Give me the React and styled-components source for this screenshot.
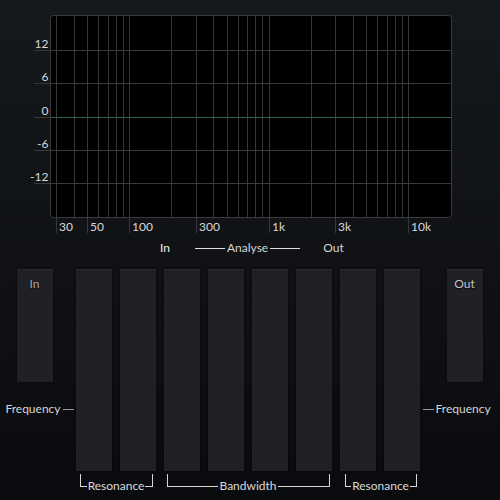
import React from "react";
import styled, { createGlobalStyle } from "styled-components";

const GlobalStyle = createGlobalStyle`
  html, body {
    margin: 0;
    padding: 0;
  }
  body {
    width: 500px;
    height: 500px;
    overflow: hidden;
    background: linear-gradient(180deg, #15181c 0%, #101215 50%, #0a0b0e 100%);
    font-family: Lato, "Noto Sans", sans-serif;
    color: #d8d8d8;
  }
`;

const Page = styled.div`
  width: 500px;
  height: 500px;
  display: flex;
  flex-direction: column;
`;

const Chart = styled.svg`
  display: block;
  width: 460px;
  height: 238px;
  flex: none;
`;

const AnalyseRow = styled.div`
  display: flex;
  align-items: center;
  height: 16px;
  margin-top: 2px;
  padding-left: 160px;
  font-size: 12px;
  line-height: 16px;
`;

const Toggle = styled.span`
  color: ${(p) => (p.$on ? "#f2f2f2" : "#d4d4d4")};
  margin: ${(p) => p.$margin || "0"};
`;

const Rule = styled.span`
  width: 30px;
  height: 1px;
  background: #e0e0e0;
  margin-top: 1px;
`;

const Controls = styled.div`
  display: flex;
  margin-top: 13px;
`;

const SideColumn = styled.div`
  width: ${(p) => p.$width}px;
  display: flex;
  flex-direction: column;
  align-items: ${(p) => (p.$right ? "flex-start" : "flex-end")};
`;

const Meter = styled.div`
  width: 36px;
  height: 113px;
  margin: ${(p) => (p.$right ? "0 0 0 27px" : "0 23px 0 0")};
  background: #202027;
  border-top: 1px solid #2b2b31;
  box-sizing: border-box;
  box-shadow: 0 0 2px rgba(0, 0, 0, 0.6);
  display: flex;
  justify-content: center;
  padding-top: 6px;
  font-size: 12px;
  line-height: 16px;
  color: ${(p) => (p.$right ? "#c6c6c6" : "#a9a9a9")};
  text-shadow: 0 1px 1px rgba(0, 0, 0, 0.8);
`;

const FreqLabel = styled.div`
  display: flex;
  align-items: center;
  gap: 2px;
  margin-top: 19px;
  font-size: 12px;
  line-height: 16px;
  color: #d6d6d6;
  ${(p) => (p.$right ? "padding-left: 3px;" : "padding-right: 2px;")}
`;

const Dash = styled.span`
  width: 11px;
  height: 1px;
  background: #9a9a9a;
  margin-top: 1px;
`;

const SliderArea = styled.div`
  display: grid;
  grid-template-columns: repeat(8, 36px);
  column-gap: 8px;
  row-gap: 3px;
`;

const Slider = styled.div`
  height: 202px;
  background: #202027;
  border-top: 1px solid #2b2b31;
  box-sizing: border-box;
  box-shadow: 0 0 2px rgba(0, 0, 0, 0.6);
`;

const Bracket = styled.div`
  grid-column: span ${(p) => p.$span};
  margin: ${(p) => p.$inset};
  display: flex;
  align-items: flex-start;
  height: 18px;
`;

const BracketLine = styled.span`
  flex: 1;
  height: 12px;
  border-bottom: 1px solid #d8d8d8;
  ${(p) => (p.$end ? "border-right" : "border-left")}: 1px solid #d8d8d8;
`;

const BracketText = styled.span`
  font-size: 12px;
  line-height: 16px;
  padding: 4px 1px 0;
  color: #dadada;
`;

const xOf = (f) => 129.3 + 139.5 * Math.log10(f / 100);

const freqs = [
  30, 40, 50, 60, 70, 80, 90, 100, 200, 300, 400, 500, 600, 700, 800, 900,
  1000, 2000, 3000, 4000, 5000, 6000, 7000, 8000, 9000, 10000,
];
const freqLabels = { 30: "30", 50: "50", 100: "100", 300: "300", 1000: "1k", 3000: "3k", 10000: "10k" };
const dbLines = [
  { y: 50, label: "12" },
  { y: 83, label: "6" },
  { y: 117, label: "0", zero: true },
  { y: 150, label: "-6" },
  { y: 183, label: "-12" },
];

const GRID = "#37383c";

function Graph() {
  return (
    <Chart viewBox="0 0 460 238">
      <rect x="50.5" y="15.5" width="401" height="202" rx="3" fill="#000" stroke="#3a3b3f" />
      {freqs.map((f) => {
        const x = Math.round(xOf(f)) + 0.5;
        const labelled = freqLabels[f];
        return (
          <g key={f}>
            <line x1={x} x2={x} y1="16" y2={labelled ? 233 : 217} stroke={GRID} />
            {labelled && (
              <text x={x + 2.5} y="230.5" fontSize="12" fill="#d8d8d8" fontFamily="Lato, sans-serif">
                {labelled}
              </text>
            )}
          </g>
        );
      })}
      {dbLines.map((d) => (
        <g key={d.label}>
          <line x1="34" x2="51" y1={d.y + 0.5} y2={d.y + 0.5} stroke={GRID} />
          <line x1="51" x2="451" y1={d.y + 0.5} y2={d.y + 0.5} stroke={d.zero ? "#2f6247" : GRID} />
          <text x="48.5" y={d.y - 2} textAnchor="end" fontSize="12" fill="#d8d8d8" fontFamily="Lato, sans-serif">
            {d.label}
          </text>
        </g>
      ))}
    </Chart>
  );
}

export default function App() {
  return (
    <Page>
      <GlobalStyle />
      <Graph />
      <AnalyseRow>
        <Toggle $on $margin="0 25px 0 0">In</Toggle>
        <Rule />
        <Toggle $margin="0 2px">Analyse</Toggle>
        <Rule />
        <Toggle $margin="0 0 0 23px">Out</Toggle>
      </AnalyseRow>
      <Controls>
        <SideColumn $width={76}>
          <Meter>In</Meter>
          <FreqLabel>
            Frequency
            <Dash />
          </FreqLabel>
        </SideColumn>
        <SliderArea>
          {Array.from({ length: 8 }, (_, i) => (
            <Slider key={i} />
          ))}
          <Bracket $span={2} $inset="0 3px 0 4px">
            <BracketLine />
            <BracketText>Resonance</BracketText>
            <BracketLine $end />
          </Bracket>
          <Bracket $span={4} $inset="0 2px 0 3px">
            <BracketLine />
            <BracketText>Bandwidth</BracketText>
            <BracketLine $end />
          </Bracket>
          <Bracket $span={2} $inset="0 3px 0 5px">
            <BracketLine />
            <BracketText>Resonance</BracketText>
            <BracketLine $end />
          </Bracket>
        </SliderArea>
        <SideColumn $width={81} $right>
          <Meter $right>Out</Meter>
          <FreqLabel $right>
            <Dash />
            Frequency
          </FreqLabel>
        </SideColumn>
      </Controls>
    </Page>
  );
}
